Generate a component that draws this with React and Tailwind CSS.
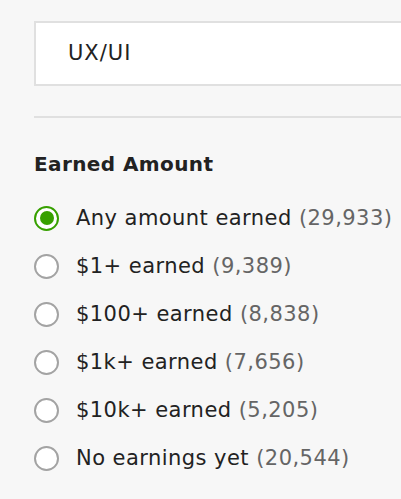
const OPTIONS = [
  { label: 'Any amount earned', count: '29,933', checked: true },
  { label: '$1+ earned', count: '9,389' },
  { label: '$100+ earned', count: '8,838' },
  { label: '$1k+ earned', count: '7,656' },
  { label: '$10k+ earned', count: '5,205' },
  { label: 'No earnings yet', count: '20,544' },
]

function Radio({ checked }) {
  if (checked) {
    return (
      <span className="w-[25px] h-[25px] shrink-0 rounded-full border-[2.5px] border-[#37a000] flex items-center justify-center bg-white">
        <span className="w-[14px] h-[14px] rounded-full bg-[#37a000]" />
      </span>
    )
  }
  return <span className="w-[25px] h-[25px] shrink-0 rounded-full border-2 border-[#a3a3a3] bg-white" />
}

export default function App() {
  return (
    <div className="w-[401px] h-[499px] overflow-hidden bg-[#f7f7f7] pt-[21px] pl-[34px] text-[#222]" style={{ fontFamily: '"DejaVu Sans", sans-serif' }}>
      <div className="w-[400px] h-[65px] bg-white border-2 border-[#e0e0e0] flex items-center pl-[32px] text-[21px] tracking-[1px]">
        UX/UI
      </div>
      <div className="mt-[30px] w-[400px] h-[2px] bg-[#e0e0e0]" />
      <h3 className="mt-[34px] h-[24px] leading-[24px] text-[20px] font-bold tracking-[0.4px]">Earned Amount</h3>
      <ul className="mt-[18px]">
        {OPTIONS.map(o => (
          <li key={o.label} className="h-[48px] flex items-center gap-[17px]">
            <Radio checked={o.checked} />
            <span className="text-[21px] leading-[24px] tracking-[0.45px] whitespace-nowrap">
              {o.label} <span className="text-[#656565]">({o.count})</span>
            </span>
          </li>
        ))}
      </ul>
    </div>
  )
}
